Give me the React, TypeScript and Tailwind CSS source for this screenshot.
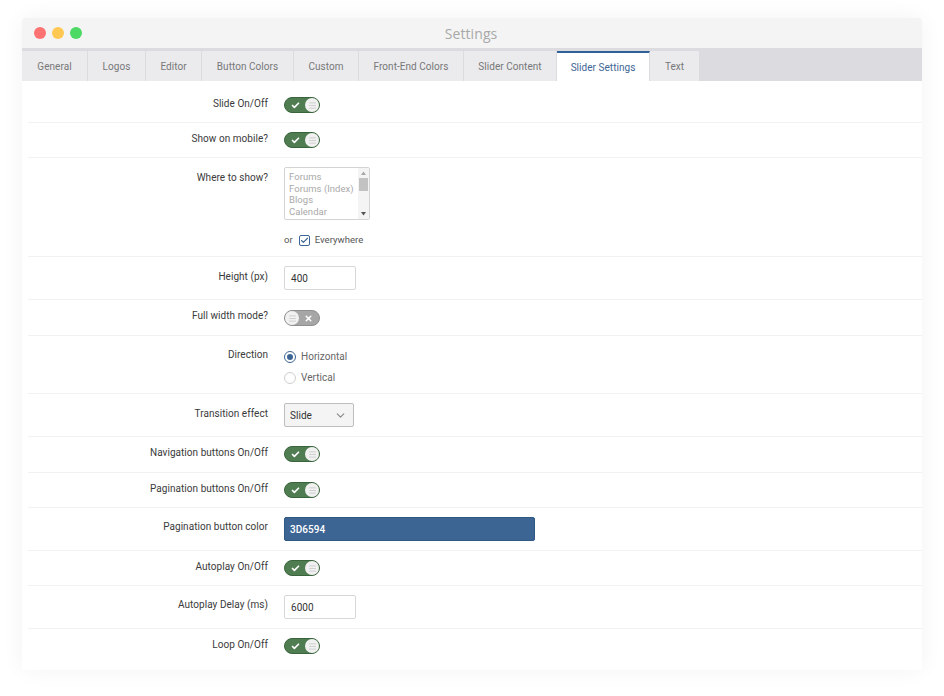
import React from "react";
import { Check, X, Menu, ChevronDown } from "lucide-react";

const tabs: [string, number][] = [
  ["General", 66], ["Logos", 58], ["Editor", 56], ["Button Colors", 92], ["Custom", 65],
  ["Front-End Colors", 105], ["Slider Content", 93], ["Slider Settings", 93], ["Text", 50],
];

function Toggle({ on = true }: { on?: boolean }) {
  if (on) {
    return (
      <div className="flex h-[16px] w-[36px] items-center justify-between rounded-full border border-[#3a643c] bg-[#4f7c50] pl-[6px]">
        <Check size={9} strokeWidth={4.5} className="text-white" />
        <div className="flex h-[14px] w-[14px] items-center justify-center rounded-full bg-[#f1f1f1]">
          <Menu size={9} className="text-[#c4c4c4]" />
        </div>
      </div>
    );
  }
  return (
    <div className="flex h-[16px] w-[36px] items-center justify-between rounded-full border border-[#8f8f8f] bg-[#a6a6a6] pr-[6px]">
      <div className="flex h-[14px] w-[14px] items-center justify-center rounded-full bg-[#f1f1f1]">
        <Menu size={9} className="text-[#c4c4c4]" />
      </div>
      <X size={9} strokeWidth={4} className="text-white" />
    </div>
  );
}

function Row({ label, h, top, children }: { label: string; h: number; top: number; children: React.ReactNode }) {
  return (
    <div className="flex border-b border-[#f2f2f4]" style={{ height: h }}>
      <div className="w-[240px] shrink-0 text-right leading-[14px] text-[#3a3a3a]" style={{ paddingTop: top }}>{label}</div>
      <div className="ml-[16px] flex-1">{children}</div>
    </div>
  );
}

export default function App() {
  return (
    <div className="h-[696px] w-[944px] overflow-hidden bg-white pl-[22px] pt-[18px] font-['Roboto',sans-serif] text-[10px] tracking-[0.04px]">
      <div className="h-[652px] w-[900px] rounded-t-[4px] bg-white shadow-[0_0_22px_rgba(0,0,0,0.05)]">
        <div className="relative flex h-[30px] items-center rounded-t-[4px] bg-[#f4f4f4] pl-[12px]">
          <div className="flex gap-[6px]">
            <div className="h-[12px] w-[12px] rounded-full bg-[#ff7272]" />
            <div className="h-[12px] w-[12px] rounded-full bg-[#ffc852]" />
            <div className="h-[12px] w-[12px] rounded-full bg-[#4cd964]" />
          </div>
          <div className="absolute inset-x-0 top-[6px] pr-[2px] text-center font-['Open_Sans',sans-serif] text-[14px] leading-[20px] tracking-[0.1px] text-[#a8a8a8]">Settings</div>
        </div>
        <div className="flex h-[33px] bg-[#dcdce0] pt-[3px]">
          {tabs.map(([t, w]) => {
            const active = t === "Slider Settings";
            return (
              <div
                key={t}
                style={{ width: w }}
                className={active
                  ? "flex items-center justify-center border-t-2 border-r border-[#2f6098] border-r-[#dcdce0] bg-white text-[#3d6594]"
                  : "flex items-center justify-center border-r border-[#dcdce0] bg-[#ebebee] text-[#777]"}
              >
                {t}
              </div>
            );
          })}
        </div>
        <div className="pl-[6px]">
          <Row label="Slide On/Off" h={42} top={16}><div className="pt-[16px]"><Toggle /></div></Row>
          <Row label="Show on mobile?" h={35} top={9}><div className="pt-[9px]"><Toggle /></div></Row>
          <Row label="Where to show?" h={99} top={13}>
            <div className="pt-[9px]">
              <div className="flex h-[53px] w-[86px] overflow-hidden rounded-[2px] border border-[#d4d4d4]">
                <div className="flex-1 overflow-hidden pl-[4px] pt-[3px] text-[9.5px] leading-[11.6px] text-[#a9a9a9]">
                  <div>Forums</div>
                  <div className="whitespace-nowrap">Forums (Index)</div>
                  <div>Blogs</div>
                  <div>Calendar</div>
                  <div>Downloads</div>
                </div>
                <div className="flex w-[11px] shrink-0 flex-col items-center bg-[#f4f4f4]">
                  <svg width="7" height="7" viewBox="0 0 7 7" className="mt-[2px]"><path d="M3.5 1.5 6 5H1z" fill="#a8a8a8" /></svg>
                  <div className="mt-[1px] h-[13px] w-[9px] bg-[#c2c2c2]" />
                  <div className="flex-1" />
                  <svg width="7" height="7" viewBox="0 0 7 7" className="mb-[2px]"><path d="M3.5 5.5 6 2H1z" fill="#555" /></svg>
                </div>
              </div>
              <div className="mt-[13px] flex items-center text-[9.5px] text-[#555]">
                <span>or</span>
                <div className="ml-[6px] mr-[5px] flex h-[11px] w-[11px] items-center justify-center rounded-[2px] border border-[#3d6594]">
                  <Check size={9} strokeWidth={3} className="text-[#3d6594]" />
                </div>
                <span>Everywhere</span>
              </div>
            </div>
          </Row>
          <Row label="Height (px)" h={43} top={13}>
            <div className="pt-[9px]">
              <div className="flex h-[24px] w-[72px] items-center rounded-[2px] border border-[#d8d8d8] pl-[6px] text-[#333]">400</div>
            </div>
          </Row>
          <Row label="Full width mode?" h={36} top={9}><div className="pt-[10px]"><Toggle on={false} /></div></Row>
          <Row label="Direction" h={58} top={12}>
            <div className="pt-[10px] text-[#666]">
              <div className="flex h-[21px] items-center">
                <div className="flex h-[12px] w-[12px] items-center justify-center rounded-full border border-[#3d6594]">
                  <div className="h-[6px] w-[6px] rounded-full bg-[#3d6594]" />
                </div>
                <span className="ml-[5px]">Horizontal</span>
              </div>
              <div className="flex h-[21px] items-center">
                <div className="h-[12px] w-[12px] rounded-full border border-[#cfcfcf]" />
                <span className="ml-[5px]">Vertical</span>
              </div>
            </div>
          </Row>
          <Row label="Transition effect" h={43} top={13}>
            <div className="pt-[9px]">
              <div className="flex h-[24px] w-[70px] items-center justify-between rounded-[2px] border border-[#bdbdbd] bg-[#f4f4f4] pl-[5px] pr-[6px] text-[#333]">
                Slide <ChevronDown size={13} className="text-[#888]" />
              </div>
            </div>
          </Row>
          <Row label="Navigation buttons On/Off" h={36} top={9}><div className="pt-[9px]"><Toggle /></div></Row>
          <Row label="Pagination buttons On/Off" h={35} top={9}><div className="pt-[9px]"><Toggle /></div></Row>
          <Row label="Pagination button color" h={43} top={12}>
            <div className="pt-[9px]">
              <div className="flex h-[24px] w-[251px] items-center rounded-[2px] border border-[#2f5783] bg-[#3d6594] pl-[5px] font-medium text-white">3D6594</div>
            </div>
          </Row>
          <Row label="Autoplay On/Off" h={35} top={9}><div className="pt-[9px]"><Toggle /></div></Row>
          <Row label="Autoplay Delay (ms)" h={43} top={12}>
            <div className="pt-[9px]">
              <div className="flex h-[24px] w-[72px] items-center rounded-[2px] border border-[#d8d8d8] pl-[6px] text-[#333]">6000</div>
            </div>
          </Row>
          <div className="flex h-[42px]">
            <div className="w-[240px] shrink-0 pt-[9px] text-right leading-[14px] text-[#3a3a3a]">Loop On/Off</div>
            <div className="ml-[16px] pt-[9px]"><Toggle /></div>
          </div>
        </div>
      </div>
    </div>
  );
}
